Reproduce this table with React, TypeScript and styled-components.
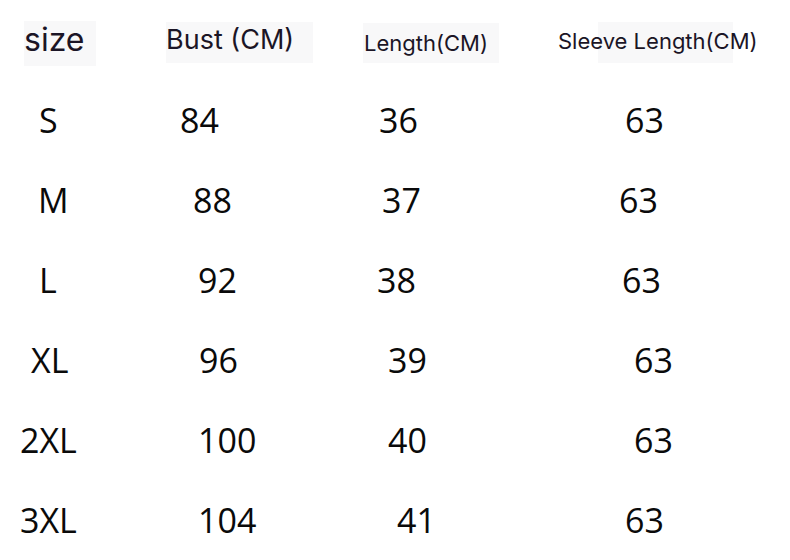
import React from "react";
import styled, { createGlobalStyle } from "styled-components";

const GlobalStyle = createGlobalStyle`
  html, body {
    margin: 0;
    padding: 0;
    background: #ffffff;
  }
  body {
    font-family: "Open Sans", "Liberation Sans", sans-serif;
  }
`;

const Chart = styled.div`
  width: 790px;
  height: 560px;
  background: #ffffff;
  display: flex;
  flex-direction: column;
  overflow: hidden;
`;

const Row = styled.div<{ $h: number }>`
  display: grid;
  grid-template-columns: 150px 200px 220px 1fr;
  height: ${(p) => p.$h}px;
  align-items: center;
`;

const HeaderRow = styled(Row)`
  align-items: start;
`;

const HeaderBox = styled.div<{ $x: number; $y: number; $w: number; $h: number }>`
  margin-left: ${(p) => p.$x}px;
  margin-top: ${(p) => p.$y}px;
  width: ${(p) => p.$w}px;
  height: ${(p) => p.$h}px;
  background: #f8f8f9;
  display: flex;
  align-items: flex-start;
  overflow: visible;
`;

const HeaderText = styled.span<{ $size: number; $dx: number; $dy: number }>`
  font-family: Inter, "Noto Sans", sans-serif;
  font-size: ${(p) => p.$size}px;
  line-height: 1;
  color: #1b1526;
  white-space: nowrap;
  margin-left: ${(p) => p.$dx}px;
  margin-top: ${(p) => p.$dy}px;
`;

const Cell = styled.div<{ $x: number }>`
  margin-left: ${(p) => p.$x}px;
  font-family: "Open Sans", "Liberation Sans", sans-serif;
  font-size: 34px;
  line-height: 80px;
  color: #0a0a0a;
  white-space: nowrap;
`;

type Header = { label: string; x: number; y: number; w: number; h: number; size: number; dx: number; dy: number };

const headers: Header[] = [
  { label: "size", x: 24, y: 21, w: 72, h: 45, size: 32, dx: 0, dy: 3 },
  { label: "Bust (CM)", x: 16, y: 22, w: 147, h: 41, size: 27, dx: 0, dy: 4 },
  { label: "Length(CM)", x: 13, y: 23, w: 136, h: 40, size: 22, dx: 1, dy: 9 },
  { label: "Sleeve Length(CM)", x: 28, y: 22, w: 135, h: 41, size: 22, dx: -40, dy: 8 },
];

type Entry = [string, number];

const rows: Entry[][] = [
  [["S", 39], ["84", 30], ["36", 29], ["63", 55]],
  [["M", 38], ["88", 43], ["37", 32], ["63", 49]],
  [["L", 39], ["92", 48], ["38", 27], ["63", 52]],
  [["XL", 31], ["96", 49], ["39", 38], ["63", 64]],
  [["2XL", 20], ["100", 48], ["40", 38], ["63", 64]],
  [["3XL", 20], ["104", 48], ["41", 47], ["63", 55]],
];

export default function App() {
  return (
    <>
      <GlobalStyle />
      <Chart>
        <HeaderRow $h={82}>
          {headers.map((h) => (
            <HeaderBox key={h.label} $x={h.x} $y={h.y} $w={h.w} $h={h.h}>
              <HeaderText $size={h.size} $dx={h.dx} $dy={h.dy}>
                {h.label}
              </HeaderText>
            </HeaderBox>
          ))}
        </HeaderRow>
        {rows.map((r, i) => (
          <Row key={i} $h={80}>
            {r.map(([text, x], j) => (
              <Cell key={j} $x={x}>
                {text}
              </Cell>
            ))}
          </Row>
        ))}
      </Chart>
    </>
  );
}
